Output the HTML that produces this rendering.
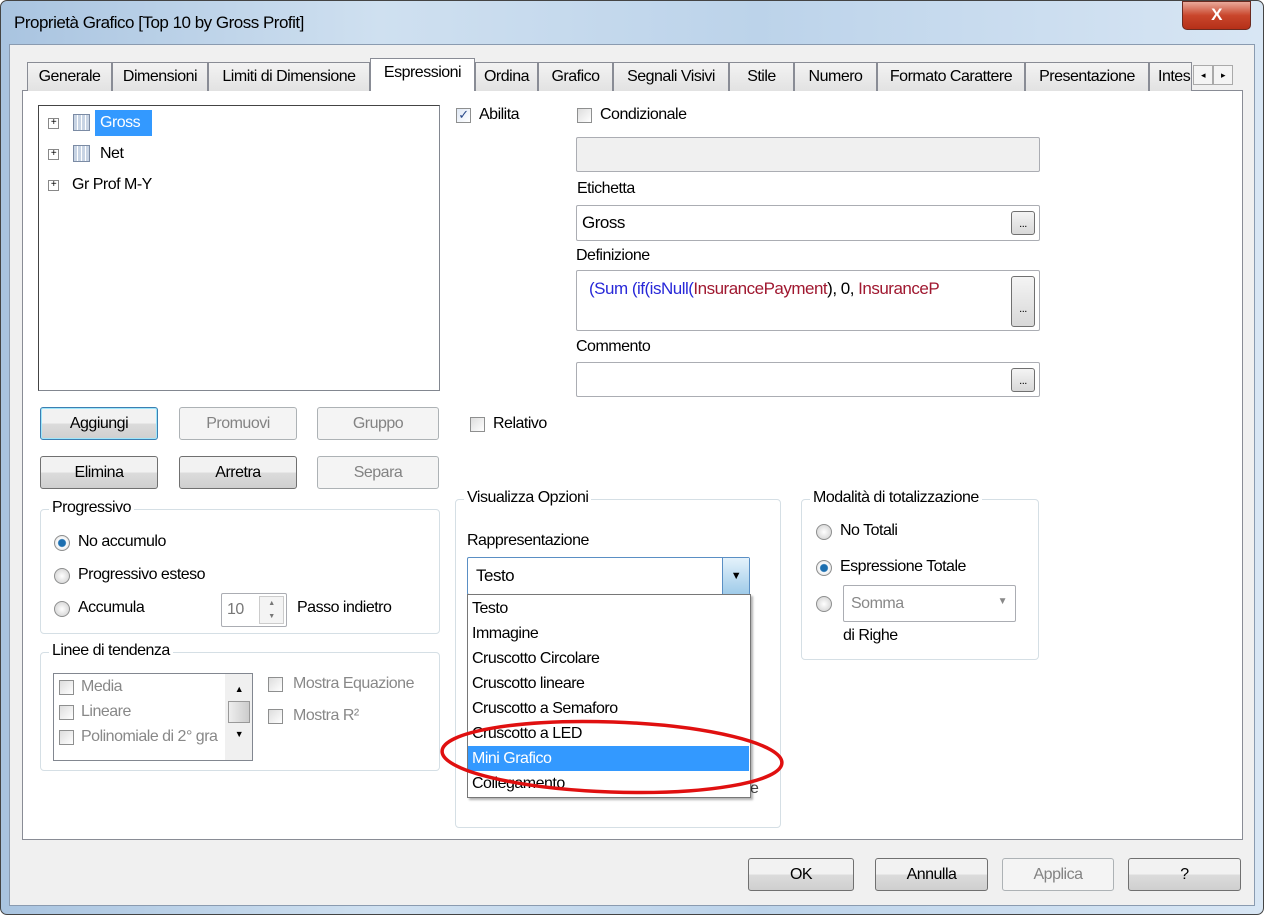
<!DOCTYPE html><html><head><style>
*{box-sizing:border-box}
body{margin:0;width:1266px;height:917px;overflow:hidden;background:#fff;font-family:"Liberation Sans",sans-serif;font-size:16px;color:#000;letter-spacing:-0.5px;line-height:1.3}
.a{position:absolute}
.win{left:0;top:0;width:1264px;height:915px;border:1px solid #444;border-radius:7px;background:linear-gradient(90deg,#a9c4e0,#cfe0f0 30%,#bcd3ea 60%,#d8e6f4);}
.face{left:9px;top:44px;width:1246px;height:862px;background:#f0f0f0;border:1px solid #8a9bb0}
.panel{left:22px;top:90px;width:1221px;height:750px;background:#fff;border:1px solid #898c95}
.tab{top:62px;height:29px;border:1px solid #898c95;border-bottom:none;background:linear-gradient(#f3f3f3,#e2e2e2);padding:4px 0 0;text-align:center;white-space:nowrap;overflow:hidden}
.btn{height:33px;border:1px solid #707070;border-radius:3px;background:linear-gradient(#f2f2f2 50%,#dcdcdc 50%,#cfcfcf);text-align:center;line-height:31px}
.dis{border-color:#adb2b5;background:#f4f4f4;color:#838383}
.inp{background:#fff;border:1px solid #abadb3;border-radius:2px}
.grp{border:1px solid #d5dfe5;border-radius:4px}
.lg{background:#fff;padding:0 3px;top:-12px;left:8px;position:absolute;white-space:nowrap}
.cb{width:15px;height:15px;border:1px solid #8e8f8f;background:linear-gradient(135deg,#ddd,#fff)}
.rd{width:16px;height:16px;border:1px solid #8e8f8f;border-radius:50%;background:radial-gradient(#fff,#ccc)}
.dots{width:24px;height:24px;border:1px solid #707070;border-radius:3px;background:linear-gradient(#f4f4f4,#d8d8d8);font-size:11px;text-align:center;line-height:24px}
.it{left:472px;height:25px;line-height:25px}
</style></head><body>
<div class="a win"></div>
<div class="a" style="left:14px;top:12px;font-size:17px">Proprietà Grafico [Top 10 by Gross Profit]</div>
<div class="a" style="left:1182px;top:1px;width:69px;height:29px;border:1px solid #6b2a20;border-radius:0 0 5px 5px;background:linear-gradient(#e9a99b,#c9462c 50%,#b53018);color:#fff;font-weight:bold;text-align:center;line-height:26px;font-size:17px">X</div>
<div class="a face"></div>
<div class="a panel"></div>
<div class="a tab" style="left:27px;width:85px">Generale</div>
<div class="a tab" style="left:112px;width:96px">Dimensioni</div>
<div class="a tab" style="left:208px;width:162px">Limiti di Dimensione</div>
<div class="a tab" style="left:370px;top:58px;height:33px;width:105px;background:#fff">Espressioni</div>
<div class="a tab" style="left:475px;width:63px">Ordina</div>
<div class="a tab" style="left:538px;width:75px">Grafico</div>
<div class="a tab" style="left:613px;width:116px">Segnali Visivi</div>
<div class="a tab" style="left:729px;width:65px">Stile</div>
<div class="a tab" style="left:794px;width:83px">Numero</div>
<div class="a tab" style="left:877px;width:148px">Formato Carattere</div>
<div class="a tab" style="left:1025px;width:124px">Presentazione</div>
<div class="a tab" style="left:1149px;width:43px;text-align:left;padding-left:8px">Intes</div>
<div class="a" style="left:1193px;top:65px;width:20px;height:20px;border:1px solid #aaa;background:#f4f4f4;font-size:9px;text-align:center;line-height:18px">◂</div>
<div class="a" style="left:1213px;top:65px;width:20px;height:20px;border:1px solid #aaa;background:#f4f4f4;font-size:9px;text-align:center;line-height:18px">▸</div>

<div class="a" style="left:38px;top:105px;width:402px;height:286px;border:1px solid #828790;border-top-color:#444;border-left-color:#444"></div>
<div class="a" style="left:48px;top:118px;width:11px;height:11px;border:1px solid #888;font-size:10px;line-height:8px;text-align:center">+</div>
<div class="a" style="left:73px;top:114px;width:17px;height:17px;border:1px solid #7b8ba4;background:repeating-linear-gradient(90deg,#c8d4e4 0 3px,#fff 3px 4px)"></div>
<div class="a" style="left:95px;top:110px;width:57px;height:26px;background:#3399ff;color:#fff;padding:3px 5px;line-height:1.2">Gross</div>
<div class="a" style="left:48px;top:149px;width:11px;height:11px;border:1px solid #888;font-size:10px;line-height:8px;text-align:center">+</div>
<div class="a" style="left:73px;top:145px;width:17px;height:17px;border:1px solid #7b8ba4;background:repeating-linear-gradient(90deg,#c8d4e4 0 3px,#fff 3px 4px)"></div>
<div class="a" style="left:100px;top:144px">Net</div>
<div class="a" style="left:48px;top:180px;width:11px;height:11px;border:1px solid #888;font-size:10px;line-height:8px;text-align:center">+</div>
<div class="a" style="left:72px;top:175px">Gr Prof M-Y</div>

<div class="a btn" style="left:40px;top:407px;width:118px;border-color:#3c7fb1;box-shadow:inset 0 0 0 1px #9ee6fb">Aggiungi</div>
<div class="a btn dis" style="left:179px;top:407px;width:118px">Promuovi</div>
<div class="a btn dis" style="left:317px;top:407px;width:122px">Gruppo</div>
<div class="a btn" style="left:40px;top:456px;width:118px">Elimina</div>
<div class="a btn" style="left:179px;top:456px;width:118px">Arretra</div>
<div class="a btn dis" style="left:317px;top:456px;width:122px">Separa</div>

<div class="a grp" style="left:40px;top:509px;width:400px;height:125px"><span class="lg">Progressivo</span></div>
<div class="a rd" style="left:54px;top:535px;background:radial-gradient(#1d6fb0 35%,#fff 45%,#ccc)"></div><div class="a" style="left:78px;top:532px">No accumulo</div>
<div class="a rd" style="left:54px;top:568px"></div><div class="a" style="left:78px;top:565px">Progressivo esteso</div>
<div class="a rd" style="left:54px;top:601px"></div><div class="a" style="left:78px;top:598px">Accumula</div>
<div class="a inp" style="left:221px;top:593px;width:66px;height:34px;color:#777;padding:6px 5px;line-height:1.2">10</div>
<div class="a" style="left:259px;top:596px;width:25px;height:28px;border:1px solid #ccc;background:#f4f4f4;font-size:7px;text-align:center;color:#777;line-height:13px">▲<br>▼</div>
<div class="a" style="left:297px;top:598px">Passo indietro</div>

<div class="a grp" style="left:40px;top:652px;width:400px;height:119px"><span class="lg">Linee di tendenza</span></div>
<div class="a" style="left:53px;top:673px;width:200px;height:88px;border:1px solid #828790;background:#fff;overflow:hidden;color:#888">
<div class="a cb" style="left:5px;top:6px"></div><div class="a" style="left:27px;top:3px">Media</div>
<div class="a cb" style="left:5px;top:31px"></div><div class="a" style="left:27px;top:28px">Lineare</div>
<div class="a cb" style="left:5px;top:56px"></div><div class="a" style="left:27px;top:53px;white-space:nowrap">Polinomiale di 2° gra</div>
<div class="a" style="left:171px;top:0;width:28px;height:88px;background:#f0f0f0;color:#000;font-size:9px;text-align:center;line-height:1.2"><div style="margin-top:10px">▲</div><div style="margin:6px auto;width:22px;height:22px;border:1px solid #999;background:linear-gradient(90deg,#eee,#ccc)"></div><div>▼</div></div>
</div>
<div class="a cb" style="left:268px;top:677px"></div><div class="a" style="left:293px;top:674px;color:#888">Mostra Equazione</div>
<div class="a cb" style="left:268px;top:709px"></div><div class="a" style="left:293px;top:706px;color:#888">Mostra R²</div>

<div class="a cb" style="left:456px;top:108px;background:linear-gradient(135deg,#dfe8f5,#fff);color:#2a4a8a;font-size:13px;line-height:12px;text-align:center">✓</div><div class="a" style="left:479px;top:105px">Abilita</div>
<div class="a cb" style="left:577px;top:108px"></div><div class="a" style="left:600px;top:105px">Condizionale</div>
<div class="a inp" style="left:576px;top:137px;width:464px;height:35px;background:#f0f0f0"></div>
<div class="a" style="left:577px;top:179px">Etichetta</div>
<div class="a inp" style="left:576px;top:205px;width:464px;height:36px;padding:6px 5px;font-size:17px;line-height:1.3">Gross</div>
<div class="a dots" style="left:1011px;top:211px">...</div>
<div class="a" style="left:576px;top:246px">Definizione</div>
<div class="a inp" style="left:576px;top:270px;width:464px;height:61px;padding:7px 12px;white-space:nowrap;overflow:hidden;font-size:17px;color:#000"><span style="color:#2828d8">(Sum</span> <span style="color:#2828d8">(if(isNull(</span><span style="color:#a01830">InsurancePayment</span>), 0, <span style="color:#a01830">InsuranceP</span></div>
<div class="a dots" style="left:1011px;top:276px;height:51px;line-height:64px">...</div>
<div class="a" style="left:576px;top:337px">Commento</div>
<div class="a inp" style="left:576px;top:362px;width:464px;height:35px"></div>
<div class="a dots" style="left:1011px;top:368px">...</div>

<div class="a cb" style="left:470px;top:417px"></div><div class="a" style="left:493px;top:414px">Relativo</div>

<div class="a grp" style="left:455px;top:499px;width:326px;height:329px"><span class="lg" style="background:#fff">Visualizza Opzioni</span></div>
<div class="a" style="left:467px;top:531px">Rappresentazione</div>
<div class="a" style="left:750px;top:779px;color:#444">e</div>
<div class="a inp" style="left:467px;top:557px;width:283px;height:38px;border-color:#5a8fc4;padding:8px 8px;font-size:17px;line-height:1.2">Testo</div>
<div class="a" style="left:722px;top:558px;width:27px;height:36px;background:linear-gradient(#e4f2fb,#9fcbe9);border-left:1px solid #5a8fc4;font-size:11px;text-align:center;line-height:36px">▼</div>
<div class="a" style="left:467px;top:594px;width:284px;height:204px;background:#fff;border:1px solid #777;box-shadow:2px 2px 2px rgba(0,0,0,.3)"></div>
<div class="a it" style="top:596px">Testo</div>
<div class="a it" style="top:621px">Immagine</div>
<div class="a it" style="top:646px">Cruscotto Circolare</div>
<div class="a it" style="top:671px">Cruscotto lineare</div>
<div class="a it" style="top:696px">Cruscotto a Semaforo</div>
<div class="a it" style="top:721px">Cruscotto a LED</div>
<div class="a" style="left:468px;top:746px;width:281px;height:25px;background:#3399ff"></div>
<div class="a it" style="top:746px;color:#fff">Mini Grafico</div>
<div class="a it" style="top:771px">Collegamento</div>
<svg class="a" style="left:430px;top:700px" width="370" height="110"><ellipse cx="182" cy="57" rx="170" ry="35" fill="none" stroke="#e01010" stroke-width="3.5" transform="rotate(2 182 57)"/></svg>

<div class="a grp" style="left:801px;top:499px;width:238px;height:161px"><span class="lg">Modalità di totalizzazione</span></div>
<div class="a rd" style="left:816px;top:524px"></div><div class="a" style="left:840px;top:521px">No Totali</div>
<div class="a rd" style="left:816px;top:560px;background:radial-gradient(#1d6fb0 35%,#fff 45%,#ccc)"></div><div class="a" style="left:840px;top:557px">Espressione Totale</div>
<div class="a rd" style="left:816px;top:596px"></div>
<div class="a inp" style="left:843px;top:585px;width:173px;height:37px;padding:8px 7px;color:#888;line-height:1.2">Somma<span style="position:absolute;right:8px;top:10px;font-size:10px">▼</span></div>
<div class="a" style="left:843px;top:626px">di Righe</div>

<div class="a btn" style="left:748px;top:858px;width:106px">OK</div>
<div class="a btn" style="left:875px;top:858px;width:113px">Annulla</div>
<div class="a btn dis" style="left:1002px;top:858px;width:112px">Applica</div>
<div class="a btn" style="left:1128px;top:858px;width:113px">?</div>
</body></html>
